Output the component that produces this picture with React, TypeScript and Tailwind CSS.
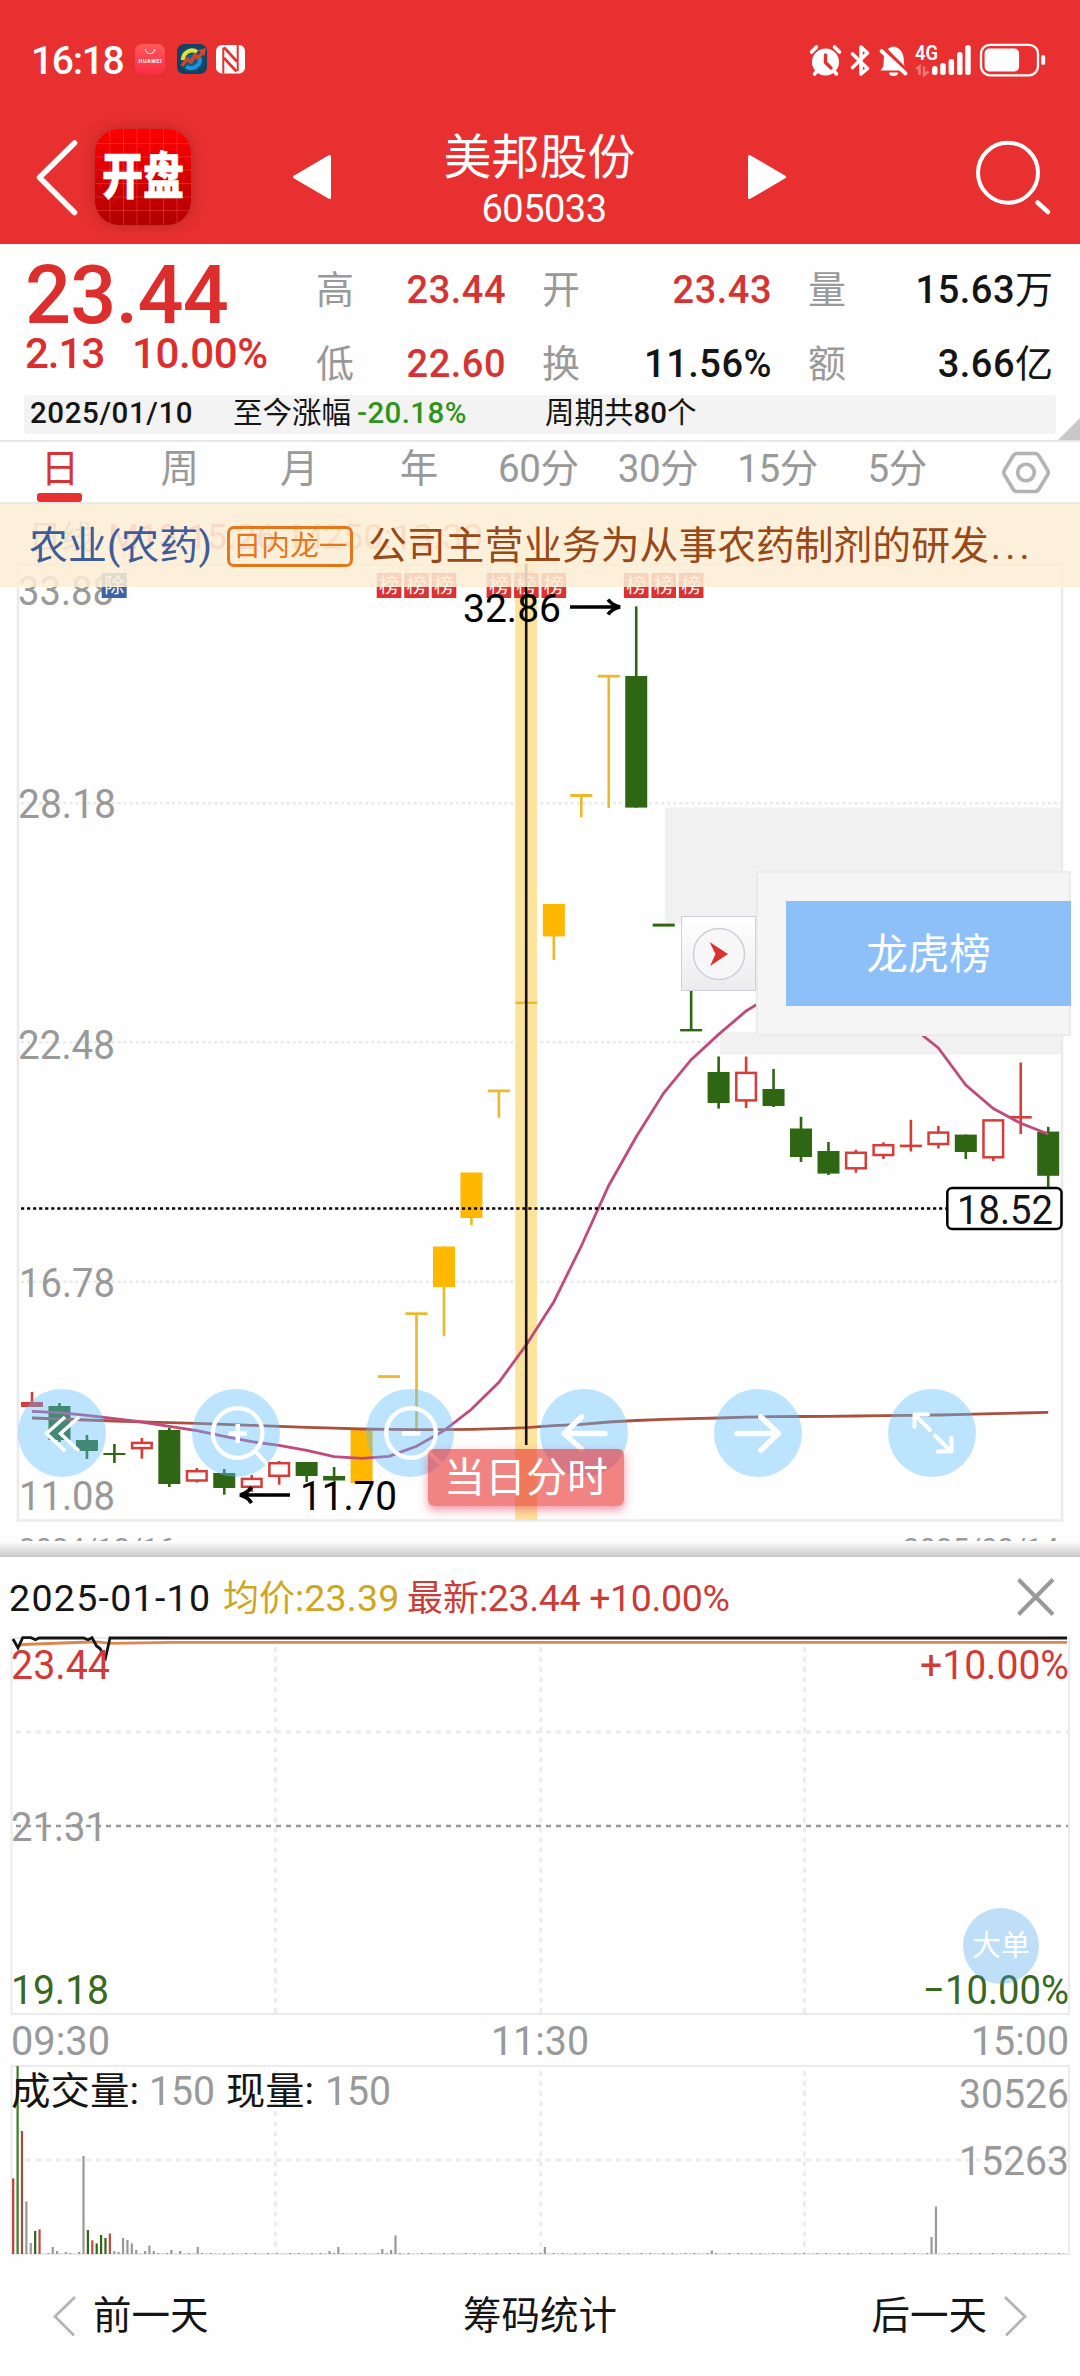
import React from "react";

type Kind = "r" | "g" | "y";
// kind, wick top, wick bottom, body top, body bottom, hollow
type Candle = [Kind, number, number, number, number, boolean?];

const INK: Record<Kind, string> = { r: "#d63c38", g: "#2f6614", y: "#ffb800" };

const CANDLES: Candle[] = [
  ["r", 1392, 1407, 1402, 1407],
  ["g", 1403, 1442, 1406, 1440],
  ["g", 1435, 1459, 1440, 1451],
  ["g", 1444, 1463, 1453, 1455],
  ["r", 1438, 1458.7, 1441.7, 1449.3, true],
  ["g", 1428, 1487, 1430, 1484],
  ["r", 1468, 1482.5, 1470, 1481.7, true],
  ["g", 1469, 1494.7, 1473, 1488],
  ["r", 1475, 1492, 1477.7, 1488, true],
  ["r", 1461, 1484.7, 1462, 1477, true],
  ["g", 1462, 1482, 1462, 1476],
  ["g", 1467, 1480.7, 1476, 1480.5],
  ["y", 1430, 1483, 1430, 1483],
  ["y", 1375.5, 1378, 1375.2, 1378],
  ["y", 1313.7, 1435.7, 1312.3, 1315],
  ["y", 1246.5, 1336, 1246.5, 1287],
  ["y", 1172.5, 1225, 1172.5, 1218],
  ["y", 1090, 1117.7, 1089.5, 1092.3],
  ["y", 1002, 1004, 1001.6, 1004],
  ["y", 904, 959.8, 904, 936.4],
  ["y", 795, 817.3, 794, 797],
  ["y", 676, 808, 674.8, 677.6],
  ["g", 606.4, 807.6, 676, 807.6],
  ["g", 924, 926, 923.6, 926.6],
  ["g", 960, 1030, 1029, 1031.4],
  ["g", 1056.5, 1108.6, 1072, 1103],
  ["r", 1056.5, 1108, 1071.7, 1101.6, true],
  ["g", 1069, 1107, 1089, 1106],
  ["g", 1116.8, 1162, 1128.5, 1157],
  ["g", 1142, 1175, 1151, 1173.6],
  ["r", 1149.8, 1172.7, 1151.6, 1169.5, true],
  ["r", 1142.4, 1158.9, 1144, 1156.2, true],
  ["r", 1119.8, 1151.5, 1144.6, 1147.2],
  ["r", 1126, 1148.5, 1131.4, 1145.2, true],
  ["g", 1134.6, 1159, 1134.6, 1152],
  ["r", 1119.4, 1161, 1119.2, 1158.5, true],
  ["r", 1062.6, 1134, 1116, 1118.6],
  ["g", 1126.8, 1187, 1131.6, 1175.8],
];

const cx = (i: number) => 32 + 27.465 * i;

const MA13 = [
  1411.3, 1412.7, 1415.3, 1418.7, 1422, 1426.3, 1430.7, 1436.3, 1441.7, 1445.3, 1450.3, 1456.7, 1458.3, 1456.3,
  1446.3, 1430.7, 1409.3, 1382.3, 1344.7, 1301.7, 1246, 1185.5, 1136.8, 1093, 1059.6, 1034.4, 1011, 994.5, 985,
  985, 994, 1005, 1026, 1047.9, 1085, 1108.6, 1123.3, 1134,
];
const MA250 = [
  1418, 1419, 1420, 1421, 1421.8, 1422.6, 1423.3, 1424.3, 1425.3, 1426.3, 1427.3, 1428.2, 1429, 1429.4, 1429.7,
  1429.6, 1429.3, 1428.7, 1427.6, 1425.7, 1424.3, 1422, 1420.5, 1419.3, 1418.6, 1418, 1417.2, 1416.7, 1416.5,
  1416.3, 1416, 1415.7, 1415.4, 1415, 1414.3, 1413.7, 1413, 1412.3,
];
const toPoints = (v: number[]) => v.map((y, i) => `${cx(i)},${y}`).join(" ");

const FONT = "Roboto, 'Noto Sans CJK SC', sans-serif";

type LabelProps = {
  x: number;
  y: number;
  w?: number;
  size?: number;
  fill?: string;
  children: string;
};

// A chart label fitted to a fixed width
function Label({ x, y, w, size = 40, fill = "#999", children }: LabelProps) {
  return (
    <text x={x} y={y} fontSize={size} fill={fill} fontFamily={FONT} textLength={w} lengthAdjust="spacingAndGlyphs">
      {children}
    </text>
  );
}

function StatusBar() {
  return (
    <div className="flex h-[88px] items-start pt-[43px] pl-[31px] text-white">
      <span className="w-[104px] pt-px text-[39px] leading-[34px] font-medium tracking-[-1.300px]">16:18</span>
      <svg className="mt-px h-[30px] w-[112px]" viewBox="135 44 112 30">
        <defs>
          <linearGradient id="hw" x1="0" y1="0" x2="0" y2="1">
            <stop offset="0" stopColor="#ff5a5a" />
            <stop offset="1" stopColor="#fb2c45" />
          </linearGradient>
          <radialGradient id="trade">
            <stop offset="0" stopColor="#0b6b94" />
            <stop offset="1" stopColor="#14405f" />
          </radialGradient>
        </defs>
        <rect x="135" y="44" width="30" height="30" rx="7" fill="url(#hw)" />
        <path d="M145.500 49a4.600 4.600 0 0 0 9.200 0" fill="none" stroke="#fff" strokeWidth="1" />
        <text x="138.500" y="63.300" fontSize="5.500" fontWeight="700" fill="#fff" fontFamily={FONT} textLength="23">
          HUAWEI
        </text>
        <rect x="177" y="44" width="30" height="30" rx="7" fill="url(#trade)" />
        <path d="M183 60a9 9 0 0 1 14-8" fill="none" stroke="#e2e23c" strokeWidth="4" />
        <path d="M200 58a9 9 0 0 1-14 8.500" fill="none" stroke="#1795e0" strokeWidth="4" />
        <path d="M182 66l5-7 4 3 4-7 3 3 5-6" fill="none" stroke="#d0482c" strokeWidth="3.500" />
        <path d="M198 50l8-2-1.500 8z" fill="#d0482c" />
        <rect x="216" y="45" width="29" height="28.500" rx="6" fill="#fff" />
        <path d="M223.300 47.500V73.500M237.700 45V71" stroke="#e83030" strokeWidth="2" fill="none" />
        <path d="M224 47.500L237 61.500M224 58L236.500 71.500" stroke="#e83030" strokeWidth="2.600" fill="none" />
      </svg>
      <svg className="ml-[561px] h-[34px] w-[240px]" viewBox="808 42 240 34">
        <g fill="none" stroke="#fff" strokeLinecap="round">
          <circle cx="825.500" cy="61" r="13.500" fill="#fff" stroke="none" />
          <path d="M811.500 51l5-5M839.500 51l-5-5M814.500 73l3-3.500M836.500 73l-3-3.500" strokeWidth="3.600" />
          <path d="M825.500 54v7.500l5.500 5.500" stroke="#e83030" strokeWidth="3.400" />
          <path d="M852.500 53l15 14.500-6.500 5.500v-27l6.500 6-15 14.500" strokeWidth="3.600" strokeLinejoin="round" />
        </g>
        <path d="M880.500 69.500c3-3 3.200-6 3.200-10 0-8 3.500-13 9.800-14 6.300 1 10.300 6 10.300 14 0 4 .5 6.500 2.700 10z" fill="#fff" />
        <path d="M889 71.500h9a4.500 3.500 0 0 1-9 0z" fill="#fff" />
        <path d="M883 46.500l25 25" stroke="#e83030" strokeWidth="4" />
        <path d="M881.500 50l24 22.500" stroke="#fff" strokeWidth="3.800" strokeLinecap="round" />
        <text x="915" y="59" fontSize="19.500" fontWeight="600" fill="#fff" fontFamily={FONT} textLength="23" lengthAdjust="spacingAndGlyphs">
          4G
        </text>
        <path d="M916 68l3.500-2.500V74M924 65.500V74l4.500-3.500" stroke="#fff" strokeOpacity=".35" strokeWidth="2.500" fill="none" />
        <g fill="#fff">
          <rect x="932" y="65" width="5.500" height="9" rx="2.500" />
          <rect x="940.200" y="62" width="5.500" height="12" rx="2.500" />
          <rect x="948.600" y="58" width="5.500" height="16" rx="2.500" />
          <rect x="957" y="51" width="5.500" height="23" rx="2.500" />
          <rect x="965.200" y="44" width="5.500" height="30" rx="2.500" />
          <rect x="984.600" y="47.600" width="34.500" height="22.800" rx="4.500" />
          <rect x="1041.200" y="54" width="4" height="10" rx="2" />
        </g>
        <rect x="981" y="43.800" width="57" height="30.500" rx="9" fill="none" stroke="#fff" strokeWidth="2.300" />
      </svg>
    </div>
  );
}

function TitleBar() {
  return (
    <div className="flex h-[156px] items-start text-white">
      <svg className="mt-[50px] ml-[34px] h-[80px] w-[46px]" viewBox="34 138 46 80">
        <path d="M74.500 143L39.500 177.500L74.500 212.500" fill="none" stroke="#fff" strokeWidth="5.500" strokeLinecap="round" strokeLinejoin="round" />
      </svg>
      <div className="relative mt-[41px] ml-[15px] h-[96px] w-[96px] overflow-hidden rounded-[24px] bg-linear-to-b from-[#ff0000] to-[#b00000] shadow-[0_0_14px_rgba(120,30,30,0.45)]">
        <svg className="absolute inset-0 h-full w-full" viewBox="0 0 96 96">
          <path
            d="M15 0V96M28.500 0V96M42 0V96M55 0V96M68.500 0V96M82 0V96M0 14.500H96M0 28H96M0 41H96M0 54.500H96M0 68H96M0 81.500H96"
            stroke="#ff5a5a"
            strokeOpacity=".4"
            strokeWidth="1"
          />
        </svg>
        <div className="relative flex h-full scale-y-[1.22] items-center justify-center pt-px text-[41px] leading-none font-black [-webkit-text-stroke:0.500px_white]">
          <span>开盘</span>
        </div>
      </div>
      <svg className="mt-[66px] ml-[101px] h-[46px] w-[40px]" viewBox="292 154 40 46">
        <path d="M294.500 177L329.500 156.500V197.500z" fill="#fff" stroke="#fff" strokeWidth="3" strokeLinejoin="round" />
      </svg>
      <div className="ml-[70px] flex w-[284px] flex-col items-center pt-[44px]">
        <div className="mr-[9px] text-[48px] leading-[52px]">美邦股份</div>
        <div className="mt-[5px] text-[38px] leading-[40px] tracking-[-0.500px]">605033</div>
      </div>
      <svg className="mt-[66px] ml-[61px] h-[46px] w-[40px]" viewBox="747 154 40 46">
        <path d="M784.500 177L749.500 156.500V197.500z" fill="#fff" stroke="#fff" strokeWidth="3" strokeLinejoin="round" />
      </svg>
      <svg className="mt-[50px] ml-[187px] h-[80px] w-[80px]" viewBox="974 138 80 80">
        <circle cx="1008" cy="172.700" r="30" fill="none" stroke="#fff" strokeWidth="4" />
        <path d="M1037.500 202.500L1048 212" stroke="#fff" strokeWidth="4.500" strokeLinecap="round" />
      </svg>
    </div>
  );
}

function Stat({ label, value, unit, red }: { label: string; value: string; unit?: string; red?: boolean }) {
  return (
    <div className="flex justify-between">
      <span className="text-[#999]">{label}</span>
      <span className={red ? "text-[#d63333]" : "text-[#151515]"}>
        <span className="font-medium tracking-[0.500px]">{value}</span>
        {unit}
      </span>
    </div>
  );
}

function Quote() {
  return (
    <div className="h-[196px]">
      <div className="flex h-[151px]">
        <div className="w-[290px] pt-[12px] pl-[25px] font-medium whitespace-nowrap text-[#dd2e2e]">
          <div className="text-[81px] leading-[80px] tracking-[-0.700px]">23.44</div>
          <div className="flex text-[42px] leading-[36px] tracking-[-0.400px]">
            <span className="w-[107px] tracking-[-1px]">2.13</span>
            <span>10.00%</span>
          </div>
        </div>
        <div className="ml-[26px] grid h-[112px] grid-cols-[190px_230px_245px] content-start gap-x-[36px] gap-y-[36px] pt-[27px] text-[38px] leading-[38px]">
          <Stat label="高" value="23.44" red />
          <Stat label="开" value="23.43" red />
          <Stat label="量" value="15.63" unit="万" />
          <Stat label="低" value="22.60" red />
          <Stat label="换" value="11.56%" />
          <Stat label="额" value="3.66" unit="亿" />
        </div>
      </div>
      <div className="flex h-[45px]">
        <div className="ml-[24px] flex h-[39px] w-[1032px] items-center rounded-[4px] bg-[#f3f3f3] pb-[3px] pl-[6px] text-[29.500px] text-[#151515]">
          <span className="w-[203px] font-medium tracking-[0.600px]">2025/01/10</span>
          <span>至今涨幅</span>
          <span className="ml-[6px] w-[188px] font-medium tracking-[0.400px] text-[#2f9320]">-20.18%</span>
          <span>
            周期共<span className="font-medium">80</span>个
          </span>
        </div>
        <svg className="mt-[23px] ml-[2px] h-[22px] w-[22px]" viewBox="0 0 22 22">
          <path d="M0 22L22 0V22z" fill="#c8c8c8" />
        </svg>
      </div>
    </div>
  );
}

const TABS = ["日", "周", "月", "年", "60分", "30分", "15分", "5分"];

function Tabs() {
  return (
    <div className="flex h-[64px] border-y-2 border-[#e9e9e9] text-[38.500px] text-[#999]">
      <div className="grid w-[957px] grid-cols-8">
        {TABS.map((t, i) => (
          <div key={t} className={i === 0 ? "flex flex-col items-center text-[#d63333]" : "flex flex-col items-center"}>
            <span className="h-[51px] leading-[54px] tracking-[-0.400px]">{t}</span>
            {i === 0 && <span className="h-[9px] w-[45px] rounded-[3px] bg-[#e83030]" />}
          </div>
        ))}
      </div>
      <svg className="mt-[6px] ml-[43px] h-[48px] w-[52px]" viewBox="1000 448 52 48">
        <path
          d="M1017 453.500h18q2.500 0 4 2.500l8.500 14q1.500 2.500 0 5l-8.500 14q-1.500 2.500-4 2.500h-18q-2.500 0-4-2.500l-8.500-14q-1.500-2.500 0-5l8.500-14q1.500-2.500 4-2.500z"
          fill="none"
          stroke="#b3b3b3"
          strokeWidth="3.600"
        />
        <circle cx="1026" cy="472.500" r="8.300" fill="none" stroke="#b3b3b3" strokeWidth="3.600" />
      </svg>
    </div>
  );
}

function CandleShape({ c, i }: { c: Candle; i: number }) {
  const [k, wt, wb, bt, bb, hollow] = c;
  const x = cx(i);
  const color = INK[k];
  const thin = bb - bt < 4;
  const fill = k === "y" && thin ? "#eab92c" : color;
  return (
    <g>
      <rect x={x - 1.3} y={wt} width={2.6} height={wb - wt} fill={k === "y" ? "#eab92c" : color} />
      {hollow ? (
        <rect x={x - 9.8} y={bt + 1.2} width={19.6} height={bb - bt - 2.4} fill="#fff" stroke={color} strokeWidth={2.5} />
      ) : (
        <rect x={x - 11} y={bt} width={22} height={bb - bt} fill={fill} />
      )}
    </g>
  );
}

function KLineChart() {
  return (
    <svg className="block h-[1053px] w-[1080px]" viewBox="0 504 1080 1053">
      <Label x={29} y={549} w={64} size={33}>日线</Label>
      <Label x={108} y={549} w={168} size={35} fill="#e05a8a">M13:15.26</Label>
      <Label x={291} y={549} w={192} size={35} fill="#d48a6a">M250:13.30</Label>
      <rect x="18" y="564.500" width="1044" height="956" fill="none" stroke="#eaeaea" strokeWidth="2.500" />
      <path d="M21 803.300H1062M21 1042.200H1062M21 1281.700H1062" stroke="#e9e9e9" strokeWidth="2.600" strokeDasharray="3 3.040" />
      <rect x="665" y="807.600" width="396" height="116" fill="#f1f1f1" />
      <rect x="720" y="1031.800" width="341" height="22.600" fill="#f1f1f1" />
      <rect x="515.200" y="564" width="21.800" height="956" fill="#fde49c" />
      <Label x={18} y={605} w={96}>33.88</Label>
      <Label x={18} y={818} w={98}>28.18</Label>
      <Label x={18} y={1058.500} w={97}>22.48</Label>
      <Label x={19} y={1297} w={96}>16.78</Label>
      <Label x={19} y={1510} w={96}>11.08</Label>
      <rect x="101.700" y="573" width="25" height="25" fill="#3f62a8" />
      <text x="114.300" y="593" fontSize="20" fill="#fff" fontFamily={FONT} textAnchor="middle">除</text>
      {[13, 14, 15, 17, 18, 19, 22, 23, 24].map((i) => (
        <g key={i}>
          <rect x={cx(i) - 12.3} y="573" width="24.600" height="25" fill="#dc3232" />
          <text x={cx(i)} y="593" fontSize="20" fill="#fff" fontFamily={FONT} textAnchor="middle">榜</text>
        </g>
      ))}
      {CANDLES.map((c, i) => (
        <CandleShape key={i} c={c} i={i} />
      ))}
      <polyline points={toPoints(MA250)} fill="none" stroke="#a9513f" strokeWidth="2.800" />
      <polyline points={toPoints(MA13)} fill="none" stroke="#c04a7c" strokeWidth="2.800" />
      <path d="M21 1208.400H946" stroke="#000" strokeWidth="2.500" strokeDasharray="3.200 2.840" />
      <path d="M526.200 564V1445" stroke="#111" strokeWidth="2.600" />
      <Label x={463} y={622} w={98} size={38.5} fill="#000">32.86</Label>
      <path d="M570 607H618M608 599.500Q612 605 620 607Q612 609 608 614.500" fill="none" stroke="#000" strokeWidth="3.600" />
      <Label x={300} y={1510} w={97} fill="#000">11.70</Label>
      <path d="M290 1495H242M251.500 1487Q248 1493 240 1495Q248 1497 251.500 1503" fill="none" stroke="#000" strokeWidth="3.600" />
      <rect x="947.300" y="1188" width="114.200" height="41" rx="5" fill="#fff" stroke="#000" strokeWidth="2.500" />
      <Label x={957} y={1224.300} w={96} fill="#151515">18.52</Label>
      <Label x={19} y={1559} w={156} size={29}>2024/12/16</Label>
      <Label x={903} y={1559} w={156} size={29}>2025/02/14</Label>
    </svg>
  );
}

const ROUND_ICONS = [
  <path key="a" d="M47 28L28.500 44.500L47 62M61 28L42.500 44.500L61 62" strokeWidth="3.500" />,
  <g key="b" strokeWidth="4.300">
    <circle cx="45.600" cy="44" r="24.800" />
    <path d="M63 62L75 75" strokeWidth="4" />
    <path d="M36.500 44.500H55M45.700 35V54" strokeWidth="4.500" />
  </g>,
  <g key="c" strokeWidth="4.300">
    <circle cx="45" cy="44" r="24.800" />
    <path d="M62 62L75 75" strokeWidth="4" />
    <path d="M36 44.500H54.500" strokeWidth="4.500" />
  </g>,
  <path key="d" d="M65 44.500H24M41.500 28L24 44.500L41.500 60" strokeWidth="5.500" strokeLinecap="round" strokeLinejoin="round" />,
  <path key="e" d="M23 44.500H64M47 28L64.500 44.500L47 61" strokeWidth="5.500" strokeLinecap="round" strokeLinejoin="round" />,
  <path
    key="f"
    d="M26.500 25.500L42 41M26.500 38V25.500H40M47 46.500L63 62.500M50 62.500H63.500V49"
    strokeWidth="4"
    strokeLinecap="round"
    strokeLinejoin="round"
  />,
];

function ChartSection() {
  return (
    <div className="relative h-[1053px] overflow-hidden">
      <KLineChart />
      <div className="absolute inset-x-0 top-0 flex h-[83px] items-center bg-[rgba(252,237,212,0.86)] pt-[2px] pl-[29px] text-[38.800px] whitespace-nowrap">
        <span className="w-[198px] tracking-[0.200px] text-[#3f5c9a]">农业(农药)</span>
        <span className="flex h-[41px] w-[126px] items-center justify-center rounded-[7px] border-[3px] border-[#e6761a] text-[28.700px] leading-none text-[#e6761a]">
          日内龙一
        </span>
        <span className="ml-[15px] text-[#994817]">公司主营业务为从事农药制剂的研发</span>
        <span className="ml-[2px] tracking-[4.200px] text-[#994817]">...</span>
      </div>
      <div className="absolute top-[367px] left-[756px] flex h-[165px] w-[315px] items-center border-2 border-r-2 border-[#ebebeb] bg-[#f5f5f5] pb-[1px] pl-[28px]">
        <div className="flex h-[105px] w-[285px] shrink-0 items-center justify-center bg-[#8dbff8] pt-[4px] text-[41.500px] text-white">
          龙虎榜
        </div>
      </div>
      <div className="absolute top-[412px] left-[681px] flex h-[75px] w-[75px] items-center justify-center border-[1.500px] border-[#cfcfd8] bg-linear-to-b from-white to-[#ececee]">
        <svg className="h-[60px] w-[60px]" viewBox="0 0 60 60">
          <circle cx="30" cy="30" r="25.500" fill="#f7f7f8" stroke="#cfcfd8" strokeWidth="1.500" />
          <path d="M20.500 18L39 30L21 42L26.500 30z" fill="#dd3030" />
        </svg>
      </div>
      <div className="absolute top-[885px] left-[18px] flex gap-[86px]">
        {ROUND_ICONS.map((icon, i) => (
          <div key={i} className="h-[88px] w-[88px] rounded-full bg-[rgba(90,190,255,0.4)]">
            <svg className="h-[88px] w-[88px]" viewBox="0 0 88 88" fill="none" stroke="#fff">
              {icon}
            </svg>
          </div>
        ))}
      </div>
      <div className="absolute top-[945px] left-[428px] flex h-[57px] w-[196px] items-center justify-center rounded-[6px] bg-[rgba(232,48,48,0.6)] pt-[2px] text-[41px] text-white shadow-[0_4px_10px_rgba(232,48,80,0.5)]">
        当日分时
      </div>
      <div className="absolute inset-x-0 bottom-0 h-[16px] bg-linear-to-b from-white to-[#c8c8c8]" />
    </div>
  );
}

const VOLUME: Record<number, [number, string?]> = {
  0: [75.6, "#c23b35"], 1: [188, "#3d7a24"], 2: [123, "#a04a45"], 3: [52.6], 4: [11], 5: [23, "#2f6614"],
  6: [24.6, "#c24a45"], 9: [7], 10: [3], 12: [2], 15: [2], 16: [98], 17: [24, "#2f6614"], 18: [13.7, "#c24a45"],
  19: [10.6, "#2f6614"], 20: [19, "#2f6614"], 21: [16, "#2f6614"], 22: [20.5, "#c24a45"], 23: [3], 24: [2],
  25: [16], 26: [14], 27: [10.6], 28: [4], 30: [3], 31: [8.5], 32: [3], 36: [4], 38: [3], 42: [7], 72: [3],
  74: [7], 84: [5], 86: [4], 87: [18.5], 121: [7], 159: [3.5], 209: [17], 210: [47.5],
};

function IntradayChart() {
  return (
    <svg className="block h-[629px] w-[1080px]" viewBox="0 1627 1080 629">
      <rect x="11.500" y="1638" width="1057.500" height="376" fill="none" stroke="#ebebeb" strokeWidth="2" />
      <rect x="11.500" y="2066" width="1057.500" height="188" fill="none" stroke="#ebebeb" strokeWidth="2" />
      <path
        d="M275.500 1647V2014M540.700 1647V2014M804.500 1647V2014M275.500 2071V2254M540.700 2071V2254M804.500 2071V2254"
        stroke="#ebebeb"
        strokeWidth="2.800"
        strokeDasharray="5 5.030"
      />
      <path d="M16 1732H1068M26 2160H1068" stroke="#ebebeb" strokeWidth="3" strokeDasharray="5 5" />
      <path d="M16 1826H1068" stroke="#999" strokeWidth="2.600" strokeDasharray="5 5" />
      <polyline
        points="18,1646 23,1644.500 62,1643 90,1642 100,1642.200 110,1643.300 172,1642.400 1067,1642.400"
        fill="none"
        stroke="#d98850"
        strokeWidth="2.800"
      />
      <polyline
        points="13,1639 18,1648 22.700,1637.700 31,1637.700 35.500,1639.800 39,1638 83.700,1638 88,1639.800 92,1637.700 96.500,1646 100,1648.500 105.500,1658 110,1638 1067,1638"
        fill="none"
        stroke="#151515"
        strokeWidth="2.800"
      />
      {Array.from({ length: 240 }, (_, i) => {
        const [h, color] = VOLUME[i] ?? [(i * 7) % 5 < 2 ? 1 : 0.3];
        return <rect key={i} x={12.1 + i * 4.394} y={2254 - h} width={2.2} height={h} fill={color ?? "#999"} />;
      })}
      <Label x={11} y={1679} w={99} fill="#d23a36">23.44</Label>
      <Label x={920} y={1679} w={149} fill="#d23a36">+10.00%</Label>
      <Label x={11} y={1841} w={96}>21.31</Label>
      <Label x={11} y={2004} w={98} fill="#37691f">19.18</Label>
      <Label x={923} y={2004} w={146} fill="#37691f">−10.00%</Label>
      <Label x={11} y={2055.400} w={99}>09:30</Label>
      <Label x={491} y={2055.400} w={98}>11:30</Label>
      <Label x={971} y={2055.400} w={98}>15:00</Label>
      <Label x={11} y={2104} w={128} size={38} fill="#151515">成交量:</Label>
      <Label x={149} y={2105} w={66}>150</Label>
      <Label x={226} y={2104} w={88} size={38} fill="#151515">现量:</Label>
      <Label x={325} y={2105} w={66}>150</Label>
      <Label x={959} y={2107.500} w={110}>30526</Label>
      <Label x={959} y={2175} w={110}>15263</Label>
    </svg>
  );
}

function DayPanel() {
  return (
    <div className="relative">
      <div className="flex h-[70px] items-center pt-[12px] pr-[22px] pl-[9px] text-[36px] whitespace-nowrap">
        <span className="w-[214px] text-[37.500px] tracking-[1.300px] text-[#151515]">2025-01-10</span>
        <span className="flex w-[184px] items-baseline text-[#cfa620]">
          均价<span className="text-[37.500px] tracking-[0.200px]">:23.39</span>
        </span>
        <span className="flex items-baseline text-[#cb3c38]">
          最新<span className="text-[37.500px] tracking-[-0.350px]">:23.44 +10.00%</span>
        </span>
        <svg className="mr-px ml-auto h-[42px] w-[42px]" viewBox="0 0 42 42">
          <path d="M3.500 2.500L38 37.500M38 2.500L3.500 37.500" stroke="#999" strokeWidth="4" />
        </svg>
      </div>
      <IntradayChart />
      <div className="absolute top-[351px] left-[963px] flex h-[76px] w-[76px] items-center justify-center rounded-full bg-[rgba(60,160,235,0.32)] pt-[2px] text-[29px] text-white">
        大单
      </div>
    </div>
  );
}

function Footer() {
  return (
    <div className="flex h-[120px] items-center justify-between pr-[52px] pl-[52px] text-[38.500px] text-[#151515]">
      <div className="flex items-center gap-[16px]">
        <svg className="h-[40px] w-[25px]" viewBox="0 0 25 40">
          <path d="M23 1L3 20.500L22 39.500" fill="none" stroke="#b5b5b5" strokeWidth="2.800" />
        </svg>
        <span>前一天</span>
      </div>
      <span>筹码统计</span>
      <div className="flex items-center gap-[16px]">
        <span>后一天</span>
        <svg className="h-[40px] w-[25px]" viewBox="0 0 25 40">
          <path d="M2 1L22 20.500L3 39.500" fill="none" stroke="#b5b5b5" strokeWidth="2.800" />
        </svg>
      </div>
    </div>
  );
}

export default function App() {
  return (
    <div className="flex h-[2376px] w-[1080px] flex-col overflow-hidden bg-[#fefefe] font-[Roboto,'Noto_Sans_CJK_SC',sans-serif]">
      <header className="h-[244px] bg-[#e83030]">
        <StatusBar />
        <TitleBar />
      </header>
      <Quote />
      <Tabs />
      <ChartSection />
      <DayPanel />
      <Footer />
    </div>
  );
}
